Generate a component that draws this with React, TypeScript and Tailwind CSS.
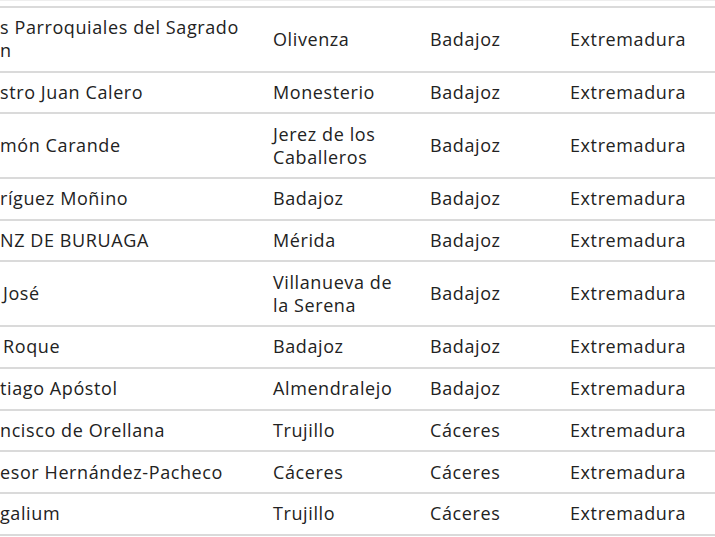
const rows: { name: React.ReactNode; town: React.ReactNode; province: string }[] = [
  {
    name: (
      <>
        s Parroquiales del Sagrado
        <br />n
      </>
    ),
    town: "Olivenza",
    province: "Badajoz",
  },
  { name: "stro Juan Calero", town: "Monesterio", province: "Badajoz" },
  { name: "món Carande", town: "Jerez de los Caballeros", province: "Badajoz" },
  { name: "ríguez Moñino", town: "Badajoz", province: "Badajoz" },
  { name: "NZ DE BURUAGA", town: "Mérida", province: "Badajoz" },
  { name: <span className="pl-[3px]">José</span>, town: "Villanueva de la Serena", province: "Badajoz" },
  { name: <span className="pl-[3px]">Roque</span>, town: "Badajoz", province: "Badajoz" },
  { name: "tiago Apóstol", town: "Almendralejo", province: "Badajoz" },
  { name: "ncisco de Orellana", town: "Trujillo", province: "Cáceres" },
  { name: "esor Hernández-Pacheco", town: "Cáceres", province: "Cáceres" },
  { name: "galium", town: "Trujillo", province: "Cáceres" },
];

export default function App() {
  return (
    <div className="w-[715px] h-[537px] overflow-hidden bg-white font-['Open_Sans',sans-serif] text-[18px] leading-[23px] tracking-[0.6px] text-[#222]">
      <div className="border-t border-[#eeeeee] pt-[5px]">
        <table className="w-[715px] table-fixed">
          <colgroup>
            <col className="w-[261px]" />
            <col className="w-[157px]" />
            <col className="w-[140px]" />
            <col />
          </colgroup>
          <tbody>
            {rows.map((r, i) => (
              <tr key={i} className="border-t-2 border-[#dadada]">
                <td className="py-[8.35px] pr-3 align-middle">{r.name}</td>
                <td className="py-[8.35px] pl-3 pr-[10px] align-middle">{r.town}</td>
                <td className="py-[8.35px] pl-3 align-middle">{r.province}</td>
                <td className="py-[8.35px] pl-3 align-middle">Extremadura</td>
              </tr>
            ))}
            <tr className="border-t-2 border-[#dadada]">
              <td colSpan={4} className="h-[10px]" />
            </tr>
          </tbody>
        </table>
      </div>
    </div>
  );
}
